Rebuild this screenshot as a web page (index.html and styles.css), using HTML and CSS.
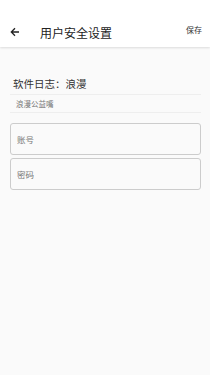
FILE: index.html
```html
<!DOCTYPE html>
<html lang="zh-CN">
<head>
    <meta charset="UTF-8">
    <meta name="viewport" content="width=device-width, initial-scale=1.0">
    <title>用户安全设置</title>
    <link rel="stylesheet" href="styles.css">
</head>
<body>
    <div class="topbar">
        <div class="topbar-left">
            <svg class="back" width="10" height="10" viewBox="0 0 10 10">
                <path d="M9 5H1.5M5 1.3L1.3 5L5 8.7" fill="none" stroke="#222" stroke-width="1.3"/>
            </svg>
            <span class="title">用户安全设置</span>
        </div>
        <span class="save">保存</span>
    </div>

    <div class="content">
        <div class="log-title">软件日志：浪漫</div>
        <div class="log-sub">浪漫公益嘴</div>

        <div class="field"><input type="text" placeholder="账号"></div>
        <div class="field"><input type="password" placeholder="密码"></div>
    </div>
</body>
</html>
```

FILE: styles.css
```css
body {
    margin: 0;
    font-family: "Noto Sans CJK SC", "Noto Sans", sans-serif;
    background-color: #fafafa;
    width: 210px;
    height: 375px;
}

.topbar {
    height: 47px;
    padding: 17px 8px 0 10px;
    box-sizing: border-box;
    background-color: #fff;
    display: flex;
    align-items: center;
    justify-content: space-between;
    box-shadow: 0 1px 2px rgba(0, 0, 0, 0.12);
}

.topbar-left {
    display: flex;
    align-items: center;
}

.back {
    margin-right: 20px;
}

.title {
    font-size: 12px;
    color: #222;
}

.save {
    font-size: 8px;
    color: #333;
    margin-top: -5px;
}

.content {
    padding: 29px 9px 0 10px;
}

.log-title {
    font-size: 10.5px;
    color: #333;
    padding: 0 0 3px 3px;
    line-height: 15px;
    border-bottom: 1px solid #eee;
}

.log-sub {
    font-size: 7.5px;
    color: #777;
    padding: 3px 0 3px 6px;
    line-height: 11px;
    border-bottom: 1px solid #eee;
    margin-bottom: 10px;
}

.field {
    margin-bottom: 3px;
}

.field input {
    width: 100%;
    height: 32px;
    box-sizing: border-box;
    border: 1px solid #ccc;
    border-radius: 3px;
    background-color: #fafafa;
    padding: 0 6px;
    font-family: "Noto Sans CJK SC", sans-serif;
    font-size: 8.5px;
    color: #333;
    outline: none;
    display: block;
}

.field input::placeholder {
    color: #777;
}
```
